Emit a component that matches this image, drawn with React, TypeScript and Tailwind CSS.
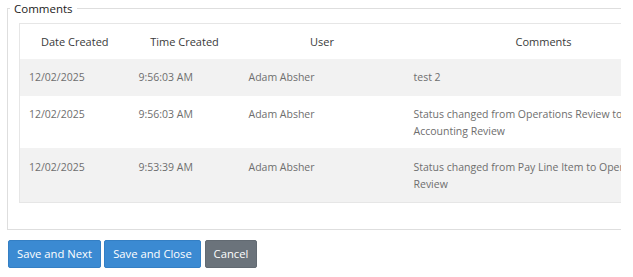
import React from "react";

const rows = [
  { date: "12/02/2025", time: "9:56:03 AM", user: "Adam Absher", lines: ["test 2"], bg: "bg-[#f2f2f2]", h: "h-[37px]", pt: "pt-[10px]" },
  { date: "12/02/2025", time: "9:56:03 AM", user: "Adam Absher", lines: ["Status changed from Operations Review to", "Accounting Review"], bg: "bg-white", h: "h-[52px]", pt: "pt-[10px]" },
  { date: "12/02/2025", time: "9:53:39 AM", user: "Adam Absher", lines: ["Status changed from Pay Line Item to Operations", "Review"], bg: "bg-[#f2f2f2]", h: "h-[54px]", pt: "pt-[11px]" },
];

export default function App() {
  return (
    <div className="w-[633px] h-[277px] bg-white overflow-hidden" style={{ fontFamily: '"Open Sans", "Noto Sans", sans-serif' }}>
      <div className="w-[621px] overflow-hidden">
        <fieldset className="ml-[7px] w-[700px] border border-[#dedede]">
          <legend className="ml-[2px] px-1 text-[11.5px] leading-[17px] text-[#222]">Comments</legend>
          <div className="pl-[11px] pt-[6px] pb-[26px]">
            <table className="table-fixed border-collapse w-[663px] border-t border-l border-b border-[#e6e6e6]">
              <colgroup>
                <col className="w-[110px]" />
                <col className="w-[110px]" />
                <col className="w-[165px]" />
                <col className="w-[278px]" />
              </colgroup>
              <thead>
                <tr className="h-[35px]">
                  {["Date Created", "Time Created", "User", "Comments"].map((h) => (
                    <th key={h} className="text-center font-normal text-[11px] leading-[17px] text-[#3a3a3a] pt-[9px] pb-[9px] align-top">
                      {h}
                    </th>
                  ))}
                </tr>
              </thead>
              <tbody>
                {rows.map((r, i) => (
                  <tr key={i} className={`${r.bg} ${r.h}`}>
                    <td className={`align-top ${r.pt} pl-[9px] text-[10.5px] leading-[17px] text-[#6e6e6e]`}>{r.date}</td>
                    <td className={`align-top ${r.pt} pl-[9px] text-[10.5px] leading-[17px] text-[#6e6e6e]`}>{r.time}</td>
                    <td className={`align-top ${r.pt} pl-[9px] text-[10.5px] leading-[17px] text-[#6e6e6e]`}>{r.user}</td>
                    <td className={`align-top ${r.pt} pl-[9px] text-[10.5px] leading-[17px] text-[#6e6e6e] whitespace-nowrap`}>
                      {r.lines.map((l, j) => (
                        <div key={j}>{l}</div>
                      ))}
                    </td>
                  </tr>
                ))}
              </tbody>
            </table>
          </div>
        </fieldset>
      </div>
      <div className="flex ml-[8px] mt-[10px] gap-[3px]">
        <button className="w-[93px] h-[28px] rounded-[2px] bg-[#3b8ad2] border border-[#347fc4] text-white text-[11.25px] leading-none">Save and Next</button>
        <button className="w-[97px] h-[28px] rounded-[2px] bg-[#3b8ad2] border border-[#347fc4] text-white text-[11.25px] leading-none">Save and Close</button>
        <button className="ml-[1px] w-[52px] h-[28px] rounded-[2px] bg-[#6b737b] border border-[#626a72] text-white text-[11.25px] leading-none">Cancel</button>
      </div>
    </div>
  );
}
